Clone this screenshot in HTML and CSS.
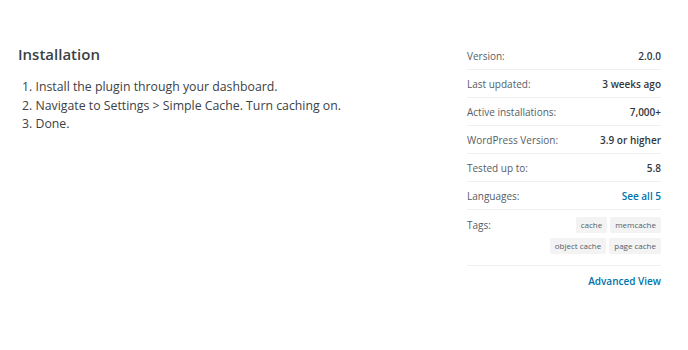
FILE: index.html
```html
<!DOCTYPE html>
<html lang="en">
<head>
    <meta charset="UTF-8">
    <meta name="viewport" content="width=device-width, initial-scale=1.0">
    <title>Simple Cache - Installation</title>
    <link rel="stylesheet" href="styles.css">
</head>
<body>
    <div id="layout">
        <section class="main">
            <h2>Installation</h2>
            <ol class="steps">
                <li>Install the plugin through your dashboard.</li>
                <li>Navigate to Settings &gt; Simple Cache. Turn caching on.</li>
                <li>Done.</li>
            </ol>
        </section>

        <aside class="meta">
            <ul>
                <li><span>Version:</span><strong>2.0.0</strong></li>
                <li><span>Last updated:</span><strong>3 weeks ago</strong></li>
                <li><span>Active installations:</span><strong>7,000+</strong></li>
                <li><span>WordPress Version:</span><strong>3.9 or higher</strong></li>
                <li><span>Tested up to:</span><strong>5.8</strong></li>
                <li><span>Languages:</span><a href="#">See all 5</a></li>
                <li class="tags">
                    <span>Tags:</span>
                    <div class="tag-list">
                        <a href="#">cache</a>
                        <a href="#">memcache</a>
                        <a href="#">object cache</a>
                        <a href="#">page cache</a>
                    </div>
                </li>
            </ul>
            <a class="advanced" href="#">Advanced View</a>
        </aside>
    </div>
</body>
</html>
```

FILE: styles.css
```css
* {margin: 0; padding: 0; box-sizing: border-box;}
body {background: #fff; color: #32373c; font-family: "Open Sans", "Liberation Sans", sans-serif;}
a {color: #0073aa; text-decoration: none;}

#layout {display: flex; justify-content: space-between; padding: 42px 27px 0 18px;}

.main h2 {font-size: 15px; font-weight: 600; line-height: 22px; margin-top: 1px; color: #3a3f44;}
.steps {list-style: none; counter-reset: step; margin-top: 13px; padding-left: 4px;}
.steps li {counter-increment: step; font-size: 12.3px; line-height: 18.5px; color: #3c4145;}
.steps li::before {content: counter(step) ". ";}

.meta {width: 194px; font-size: 10px;}
.meta ul {list-style: none;}
.meta li {display: flex; justify-content: space-between; align-items: center;
    height: 28px; border-bottom: 1px solid #efefef;}
.meta li span {color: #555d66;}
.meta li strong, .meta li > a {font-weight: 600;}

.meta li.tags {height: auto; align-items: flex-start; padding: 7px 0 11px;}
.meta li.tags span {line-height: 16px;}
.tag-list {display: flex; flex-wrap: wrap; justify-content: flex-end; gap: 5px 3px; width: 140px;}
.tag-list a {background: #f3f3f3; color: #555d66; font-size: 8px; line-height: 16px;
    padding: 0 5px; border-radius: 2px;}

.advanced {display: block; text-align: right; font-weight: 600; font-size: 10px; margin-top: 8px;}
```
